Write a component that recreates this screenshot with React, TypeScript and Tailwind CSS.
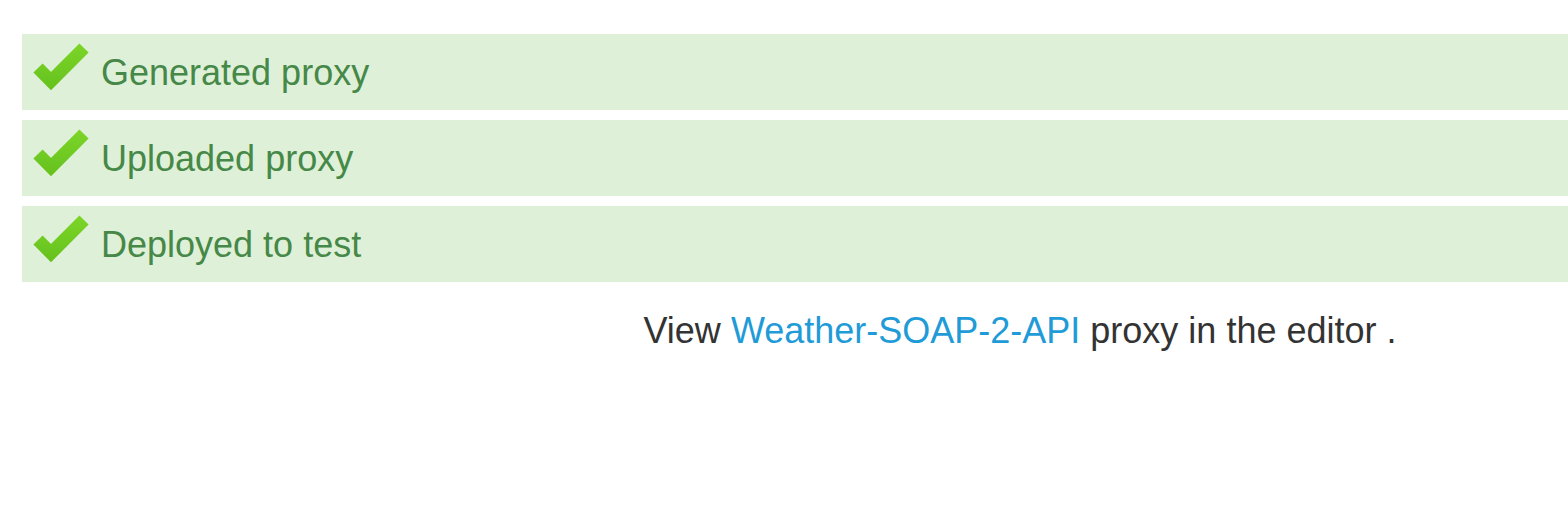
import React from 'react';

const steps = ['Generated proxy', 'Uploaded proxy', 'Deployed to test'];

const Check: React.FC = () => (
  <svg width="62" height="52" viewBox="0 0 62 52" className="shrink-0">
    <defs>
      <linearGradient id="chk" x1="0" y1="0" x2="0" y2="52" gradientUnits="userSpaceOnUse">
        <stop offset="0" stopColor="#7dd528" />
        <stop offset="1" stopColor="#62bf1c" />
      </linearGradient>
      <filter id="soft" x="0" y="0" width="62" height="52" filterUnits="userSpaceOnUse">
        <feGaussianBlur stdDeviation="0.6" />
      </filter>
    </defs>
    <polyline
      points="8,25 21,38 54,5"
      fill="none"
      stroke="url(#chk)"
      strokeWidth="13"
      strokeLinejoin="miter"
      filter="url(#soft)"
    />
  </svg>
);

export default function App() {
  return (
    <div className="w-[1568px] h-[520px] overflow-hidden bg-white font-['Liberation_Sans',Arial,sans-serif]">
      <div className="ml-[22px] w-[1996px] pt-[34px]">
        <div className="flex flex-col gap-[10px]">
          {steps.map((s) => (
            <div key={s} className="flex h-[76px] items-center bg-[#dff0d8] pl-[8px] pb-[6px]">
              <Check />
              <span className="ml-[9px] mt-[8px] text-[36px] leading-[36px] text-[#468847]">{s}</span>
            </div>
          ))}
        </div>
        <p className="mt-[31px] text-center text-[36px] leading-[36px] text-[#333333]">
          View <a className="text-[#1f9bd8]">Weather-SOAP-2-API</a> proxy in the editor .
        </p>
      </div>
    </div>
  );
}
